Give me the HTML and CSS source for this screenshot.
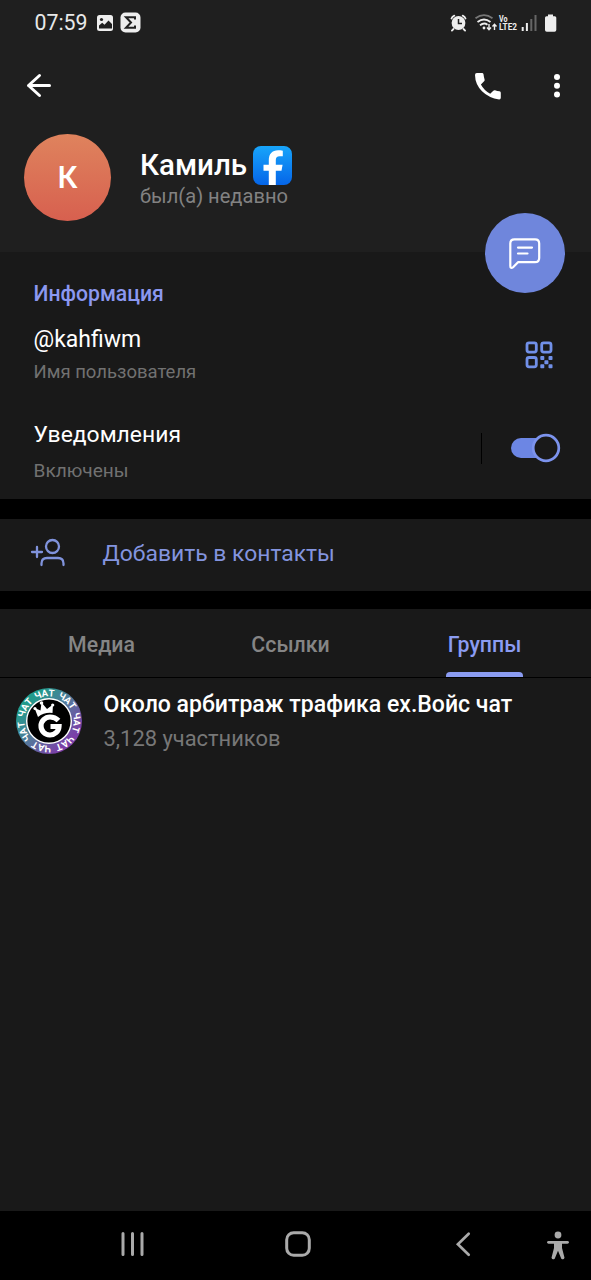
FILE: index.html
```html
<!DOCTYPE html>
<html lang="ru">
<head>
<meta charset="utf-8">
<title>Камиль</title>
<link rel="stylesheet" href="styles.css">
</head>
<body>
<div class="screen">
  <header class="header">
    <div class="statusbar">
      <span class="clock">07:59</span>
      <svg class="status-left" width="46" height="22" viewBox="96 12 46 22">
        <rect x="97" y="15" width="16" height="16" rx="2.5" fill="#eee"/>
        <circle cx="101.500" cy="19.500" r="1.600" fill="#1f1f1f"/>
        <path d="M99 28.500v-3l3.200-2.800 2.300 2 4-4.200 3.500 3.500v4.500z" fill="#1f1f1f"/>
        <rect x="120.500" y="12.500" width="20" height="20" rx="5" fill="#eee"/>
        <path d="M135 19.500v-2.200h-9l5 5.200-5 5.200h9v-2.200" fill="none" stroke="#222" stroke-width="2"/>
      </svg>
      <svg class="status-right" width="110" height="24" viewBox="450 11 110 24">
        <circle cx="458.500" cy="23" r="6.900" fill="#eee"/>
        <path d="M458.500 19v4.500h3.500" fill="none" stroke="#1f1f1f" stroke-width="1.500"/>
        <path d="M451.500 18.500q.6-2 2.800-2.900M465.500 18.500q-.6-2-2.800-2.900M453.500 29l-1.600 1.600M463.500 29l1.600 1.600" fill="none" stroke="#eee" stroke-width="1.800" stroke-linecap="round"/>
        <path d="M475.500 18.300q8.500-6.300 17 0" fill="none" stroke="#777" stroke-width="1.700"/>
        <path d="M477.500 22q6.500-5 13 0M480 25.200q4-3.200 7.500-.5" fill="none" stroke="#eee" stroke-width="1.800"/>
        <circle cx="484" cy="28" r="1.400" fill="#eee"/>
        <path d="M489 24v5.500M487 27.500l2 2.200 2-2.200M494.500 30v-5.500M492.500 26.500l2-2.200 2 2.200" fill="none" stroke="#eee" stroke-width="1.400"/>
        <text x="499" y="21.500" class="tiny" textLength="8.500" lengthAdjust="spacingAndGlyphs">Vo</text>
        <text x="499" y="29.600" class="tiny" textLength="18" lengthAdjust="spacingAndGlyphs">LTE2</text>
        <path d="M522.700 27v4M526.900 23v8" stroke="#eee" stroke-width="2"/>
        <path d="M531.300 19v12M535.500 15v16" stroke="#666" stroke-width="2"/>
        <path d="M548 14.500h5v1.800h1.800q1.500 0 1.500 1.500v12.200q0 1.800-1.800 1.800h-7.700q-1.800 0-1.800-1.800V17.800q0-1.500 1.500-1.500h1.500z" fill="#eee"/>
      </svg>
    </div>
    <div class="appbar">
      <svg width="26" height="26" viewBox="26 73 26 26"><path d="M49.500 85.500H28.500M39.500 75.500l-11 10 11 10" fill="none" stroke="#fff" stroke-width="3" stroke-linecap="round" stroke-linejoin="round"/></svg>
      <svg class="call" width="28" height="28" viewBox="474 72 28 28"><path d="M476.800 73H482q1.300 0 1.500 1.300.3 2.700 1.100 5.100.3 1-.5 1.800l-3.200 3.300q3.300 6.200 9.300 9.200l3.100-3q.7-.7 1.700-.4 2.300.8 4.500 1 1.300.2 1.300 1.500v5q0 1.700-1.600 1.700Q489 98 482 91.200 475.200 84.500 475 75q0-2 1.800-2z" fill="#fff"/></svg>
      <svg width="8" height="26" viewBox="552.500 73 8 26"><g fill="#fff"><circle cx="556.500" cy="77" r="3"/><circle cx="556.500" cy="85.700" r="3"/><circle cx="556.500" cy="94.400" r="3"/></g></svg>
    </div>
    <div class="profile">
      <div class="avatar">К</div>
      <div class="who">
        <div class="name-row"><h1 class="name">Камиль</h1>
          <svg width="39" height="39" viewBox="0 0 39 39">
            <defs><linearGradient id="fb" x1="0" y1="0" x2="0" y2="1"><stop offset="0" stop-color="#18a5fb"/><stop offset="1" stop-color="#0565e8"/></linearGradient></defs>
            <rect x="0" y="0" width="39" height="39" rx="8" fill="url(#fb)"/>
            <path d="M15.800 39V24.700h-5.300v-6h5.300v-4.200c0-6.500 3.300-10.200 9.300-10.200 1.700 0 3.200.1 4.700.4v5.500h-3c-3 0-4 1.300-4 3.800v4.700h6.800l-1.100 6h-5.700V39z" fill="#fff"/>
          </svg>
        </div>
        <div class="seen">был(а) недавно</div>
      </div>
    </div>
    <button class="fab" aria-label="Чат">
      <svg width="36" height="36" viewBox="507 236 36 36" fill="none" stroke="#fff" stroke-width="2.200" stroke-linecap="round" stroke-linejoin="round"><path d="M514.500 240.300h20.500q4.200 0 4.200 4.200v14.500q0 4.200-4.200 4.200h-17l-4.700 4.900q-3 2-3-1.200V244.500q0-4.200 4.200-4.200zM518 248.600h14M518 254.500h9.500"/></svg>
    </button>
  </header>

  <section class="info">
    <h2 class="section-title">Информация</h2>
    <div class="row username">
      <div><div class="value handle">@kahfiwm</div><div class="label l1">Имя пользователя</div></div>
      <svg width="28" height="28" viewBox="525 340.500 28 28">
        <g fill="none" stroke="#7190e8" stroke-width="2.800"><rect x="527" y="342.300" width="9.300" height="9.300" rx="2"/><rect x="541.700" y="342.300" width="9.300" height="9.300" rx="2"/><rect x="527" y="357" width="9.300" height="9.300" rx="2"/></g>
        <g fill="#7190e8"><rect x="540.300" y="355.600" width="4" height="4" rx=".8"/><rect x="548.500" y="355.600" width="4" height="4" rx=".8"/><rect x="544.400" y="359.700" width="4" height="4" rx=".8"/><rect x="540.300" y="363.800" width="4" height="4" rx=".8"/><rect x="548.500" y="363.800" width="4" height="4" rx=".8"/></g>
      </svg>
    </div>
    <div class="row notify">
      <div class="grow"><div class="value v2">Уведомления</div><div class="label l2">Включены</div></div>
      <span class="divider"></span>
      <svg width="50" height="30" viewBox="511 433 50 30"><rect x="511" y="438" width="40" height="20" rx="10" fill="#6c86e4"/><circle cx="546" cy="448" r="12.800" fill="#191919" stroke="#7c93ed" stroke-width="2.700"/></svg>
    </div>
  </section>

  <section class="add">
    <svg width="36" height="30" viewBox="30 538 36 30" fill="none" stroke="#8093dc" stroke-width="2.300" stroke-linecap="round"><path d="M32 552h10M37 547v10M41.500 565v-1.500q0-5.500 5.500-5.500h11q5.500 0 5.500 5.500v1.500"/><circle cx="52.500" cy="546.500" r="6.500"/></svg>
    <span class="add-text">Добавить в контакты</span>
  </section>

  <nav class="tabs">
    <div class="tab"><span class="t1">Медиа</span></div>
    <div class="tab"><span class="t2">Ссылки</span></div>
    <div class="tab active"><span class="t3">Группы</span></div>
  </nav>

  <main class="list">
    <div class="group">
      <svg width="68" height="68" viewBox="-34 -34 68 68">
        <defs><linearGradient id="ring" x1="0" y1="0" x2="1" y2="1"><stop offset=".2" stop-color="#219b8c"/><stop offset=".5" stop-color="#54779b"/><stop offset=".8" stop-color="#7b3fa8"/></linearGradient></defs>
        <circle r="33" fill="url(#ring)"/>
        <circle r="22.300" fill="#000" stroke="#fff" stroke-width="1.400"/>
        <g class="ring-text">
          <g transform="rotate(-9)"><text y="-24.700" transform="rotate(-14.500)">Ч</text><text y="-24.700">А</text><text y="-24.700" transform="rotate(14)">Т</text></g>
          <g transform="rotate(42.400)"><text y="-24.700" transform="rotate(-14.500)">Ч</text><text y="-24.700">А</text><text y="-24.700" transform="rotate(14)">Т</text></g>
          <g transform="rotate(93.900)"><text y="-24.700" transform="rotate(-14.500)">Ч</text><text y="-24.700">А</text><text y="-24.700" transform="rotate(14)">Т</text></g>
          <g transform="rotate(145.300)"><text y="-24.700" transform="rotate(-14.500)">Ч</text><text y="-24.700">А</text><text y="-24.700" transform="rotate(14)">Т</text></g>
          <g transform="rotate(196.700)"><text y="-24.700" transform="rotate(-14.500)">Ч</text><text y="-24.700">А</text><text y="-24.700" transform="rotate(14)">Т</text></g>
          <g transform="rotate(248.100)"><text y="-24.700" transform="rotate(-14.500)">Ч</text><text y="-24.700">А</text><text y="-24.700" transform="rotate(14)">Т</text></g>
          <g transform="rotate(299.600)"><text y="-24.700" transform="rotate(-14.500)">Ч</text><text y="-24.700">А</text><text y="-24.700" transform="rotate(14)">Т</text></g>
        </g>
        <path d="M9.500-.5Q6-4 1-4A9 9 0 1 0 10 5.500H1.500" fill="none" stroke="#fff" stroke-width="5.200"/>
        <path d="M-11-4l-3.500-9 6 2.500 1-8 5.500 6.500 6-4.500-.5 8.500q-8-1-14.500 4z" fill="#fff"/>
        <g fill="#fff"><circle cx="-14" cy="-12.500" r="1.600"/><circle cx="-7.500" cy="-18" r="1.800"/><circle cx="3.700" cy="-16" r="1.600"/></g>
      </svg>
      <div class="group-text"><div class="group-name">Около арбитраж трафика ex.Войс чат</div><div class="members">3,128 участников</div></div>
    </div>
  </main>

  <footer class="navbar">
    <svg width="24" height="26" viewBox="121 1231 24 26" stroke="#aaa" stroke-width="3" stroke-linecap="round"><path d="M123 1233.500v21M132.500 1233.500v21M142 1233.500v21"/></svg>
    <svg width="26" height="26" viewBox="285 1231 26 26"><rect x="286.700" y="1232.700" width="22.600" height="22.600" rx="7" fill="none" stroke="#aaa" stroke-width="3"/></svg>
    <svg width="16" height="26" viewBox="455 1231 16 26" fill="none" stroke="#aaa" stroke-width="2.700" stroke-linecap="round"><path d="M468.700 1233.700l-10.800 10.500 10.800 10.500"/></svg>
    <svg width="24" height="30" viewBox="545.500 1231 24 30"><circle cx="557.500" cy="1235" r="3.400" fill="#aaa"/><path d="M548 1242.300h19" stroke="#aaa" stroke-width="2.800" stroke-linecap="round"/><path d="M553.500 1242h8v6l2.500 9.700q-.8 2.500-3.200 1l-3.300-8-3.300 8q-2.400 1.500-3.200-1l2.500-9.700z" fill="#aaa"/></svg>
  </footer>
</div>
</body>
</html>
```
FILE: styles.css
```css
* { box-sizing: border-box; margin: 0; padding: 0; }
body { width: 591px; height: 1280px; overflow: hidden; background: #000; font-family: Roboto, sans-serif; color: #fff; }
svg { display: block; flex: none; }
.screen { display: flex; flex-direction: column; height: 1280px; white-space: nowrap; }

.header { position: relative; height: 252px; background: #1f1f1f; }
.statusbar { height: 46px; display: flex; align-items: flex-start; padding: 11px 31px 0 34.5px; }
.clock { font-size: 21.3px; line-height: 24px; width: 61.5px; color: #e8e8e8; }
.status-left { margin-top: 1px; }
.status-right { margin-left: auto; }
.tiny { font: 700 8.5px Roboto, sans-serif; fill: #eee; }
.appbar { height: 80px; display: flex; align-items: center; padding: 0 30.5px 0 26px; }
.call { margin-left: auto; margin-right: 50.5px; }
.profile { display: flex; padding: 8px 0 0 24px; }
.avatar { width: 87px; height: 87px; border-radius: 50%; background: linear-gradient(#df835d, #d7604f); display: flex; align-items: center; justify-content: center; font-size: 31px; font-weight: 500; }
.who { margin-left: 29px; padding-top: 12px; }
.name-row { display: flex; height: 39px; gap: 6px; }
.name { font-size: 29.5px; font-weight: 500; line-height: 39px; width: 107px; }
.seen { font-size: 20.1px; line-height: 24px; color: #828282; margin-top: -1px; }
.fab { position: absolute; left: 485px; top: 213px; width: 80px; height: 80px; border: 0; border-radius: 50%; background: #6f86dc; display: flex; align-items: center; justify-content: center; z-index: 1; }

.info { height: 247px; background: #191919; padding: 29px 30px 0 33.5px; }
.section-title { font-size: 21.2px; font-weight: 500; line-height: 26px; color: #8b98f0; }
.row { display: flex; justify-content: space-between; }
.username { margin-top: 19px; padding-right: 8px; align-items: center; }
.username svg { margin-top: -1px; }
.value { font-size: 23px; line-height: 28px; }
.v2 { font-size: 22.9px; }
.label { line-height: 24px; color: #717171; }
.l1 { margin-top: 6px; font-size: 18.5px; }
.notify { margin-top: 37px; align-items: center; }
.grow { flex: 1; }
.l2 { margin-top: 10px; font-size: 19.1px; }
.notify svg { margin-top: -8px; }
.divider { width: 1px; height: 31px; background: #000; margin: -8px 29px 0 0; }

.add { height: 72px; margin-top: 20px; background: #191919; display: flex; align-items: center; padding-left: 30px; }
.add-text { margin-left: 36.5px; margin-top: -3px; font-size: 22.9px; line-height: 28px; color: #8394df; }
.add svg { margin-top: -4px; }

.tabs { height: 69px; margin-top: 18px; background: #191919; border-bottom: 1px solid #000; display: grid; grid-template-columns: 203px 175px 213px; }
.tab { display: flex; justify-content: center; font-size: 21.3px; font-weight: 500; line-height: 26px; color: #858585; }
.tab span { height: 68px; padding-top: 23px; }
.tab.active { color: #8b9cf2; }
.active span { position: relative; }
.active span::after { content: ""; position: absolute; left: -1.5px; right: -1.5px; bottom: 0; height: 5px; border-radius: 4px 4px 0 0; background: #8b9cf2; }

.list { flex: 1; background: #191919; padding: 9px 0 0 15px; }
.group { display: flex; }
.group-text { margin-left: 20.5px; padding-top: 4px; }
.group-name { font-size: 23.05px; font-weight: 500; line-height: 28px; }
.members { font-size: 21.9px; line-height: 28px; margin-top: 6px; color: #777; }
.ring-text { font: 700 9.5px Roboto, sans-serif; fill: #fff; text-anchor: middle; }

.navbar { height: 69px; background: #000; display: flex; padding: 20px 0 0 120.5px; }
.navbar svg:nth-child(2) { margin-left: 140.5px; }
.navbar svg:nth-child(3) { margin-left: 144px; }
.navbar svg:nth-child(4) { margin-left: 74.5px; }
```
